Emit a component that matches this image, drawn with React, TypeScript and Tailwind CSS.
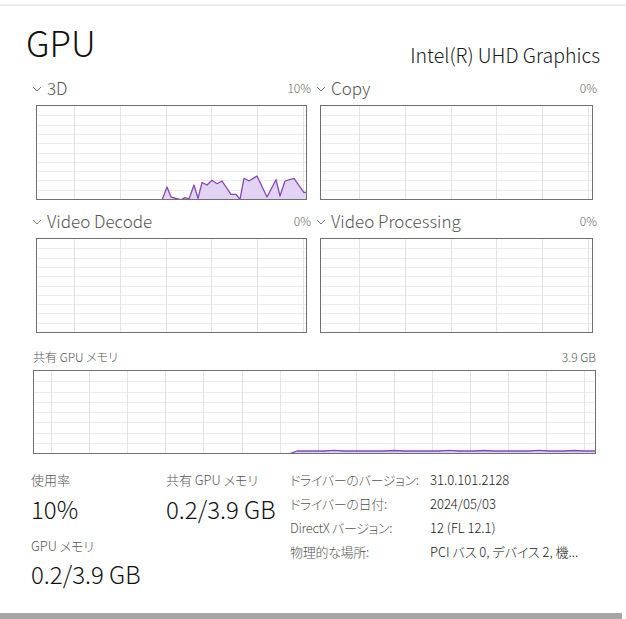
import React from 'react';

const FONT = '"Noto Sans CJK JP", "Noto Sans", sans-serif';

type Pt = [number, number];

// 3D engine samples, measured in box pixels (w 271, h 94)
const data3d: Pt[] = [
  [125, 94], [130, 81], [134, 91], [139, 92.3], [144, 93.7], [148, 91.7], [152, 93],
  [157, 79], [161, 92.3], [165, 76.7], [170, 79], [175, 74.3], [180, 77.7], [185, 75],
  [194, 88.3], [199, 88.3], [203, 93.3], [207, 72.3], [212, 75], [220, 70], [230, 91],
  [239, 73.7], [243, 90], [248, 75], [257, 72.3], [267, 86.7], [271, 85.7],
];

const memData: Pt[] = [
  [255, 83], [263, 80], [290, 80], [300, 79.4], [310, 80], [350, 80], [360, 79.5], [370, 80],
  [405, 80], [415, 79.4], [425, 80], [440, 80], [450, 79.5], [460, 80], [495, 80], [505, 79.3],
  [515, 80], [530, 80], [540, 79.5], [550, 80], [562, 80],
];

function Chevron() {
  return (
    <svg width="10" height="8" viewBox="0 0 10 8" className="mr-[5px] mt-[1px]">
      <polyline points="1,2 5,6 9,2" fill="none" stroke="#7a7a7a" strokeWidth="1" />
    </svg>
  );
}

function Graph({
  w, h, first, step, rows, points,
}: { w: number; h: number; first: number; step: number; rows: number; points?: Pt[] }) {
  const vlines: number[] = [];
  for (let x = first; x < w; x += step) vlines.push(x);
  const hlines: number[] = [];
  for (let i = 1; i < rows; i++) hlines.push((h / rows) * i);
  const line = points ? points.map((p) => p.join(',')).join(' ') : '';
  const area = points ? `${points[0][0]},${h} ${line} ${points[points.length - 1][0]},${h}` : '';
  return (
    <div className="border border-[#707070] bg-white" style={{ width: w + 2, height: h + 2 }}>
      <svg width={w} height={h} className="block">
        {hlines.map((y) => (
          <line key={'h' + y} x1={0} x2={w} y1={Math.round(y) + 0.5} y2={Math.round(y) + 0.5} stroke="#ebebeb" strokeWidth="1" />
        ))}
        {vlines.map((x) => (
          <line key={'v' + x} x1={Math.round(x) + 0.5} x2={Math.round(x) + 0.5} y1={0} y2={h} stroke="#e3e3e3" strokeWidth="1" />
        ))}
        {points && (
          <>
            <polygon points={area} fill="#e2d2f4" />
            <polyline points={line} fill="none" stroke="#8548b8" strokeWidth="1.3" strokeLinejoin="round" />
          </>
        )}
      </svg>
    </div>
  );
}

function Engine({
  name, pct, points, offset, w,
}: { name: string; pct: string; points?: Pt[]; offset: number; w: number }) {
  return (
    <div className="flex flex-col">
      <div className="flex items-center justify-between h-[20px]">
        <div className="flex items-center text-[17px] leading-[20px] text-[#555]">
          <Chevron />
          <span>{name}</span>
        </div>
        <span className="text-[12px] leading-[20px] text-[#666]">{pct}</span>
      </div>
      <div className="mt-[7px] pl-[4px]">
        <Graph w={w} h={93} first={offset} step={45.8} rows={10} points={points} />
      </div>
    </div>
  );
}

const info: [string, string][] = [
  ['ドライバーのバージョン:', '31.0.101.2128'],
  ['ドライバーの日付:', '2024/05/03'],
  ['DirectX バージョン:', '12 (FL 12.1)'],
  ['物理的な場所:', 'PCI バス 0, デバイス 2, 機...'],
];

export default function App() {
  return (
    <div
      className="w-[626px] h-[619px] bg-white flex flex-col overflow-hidden font-light [font-feature-settings:'palt']"
      style={{ fontFamily: FONT }}
    >
      <div className="h-[4px]" />
      <div className="h-[2px] bg-[#ededed]" />

      {/* Header */}
      <div className="flex items-end justify-between pl-[26px] pr-[26px] h-[66px]">
        <span className="text-[35px] leading-[44px] text-[#111] mb-[8px]">GPU</span>
        <span className="text-[19.5px] leading-[24px] text-[#1a1a1a] mb-[5px]">Intel(R) UHD Graphics</span>
      </div>

      {/* Engine graphs */}
      <div className="grid grid-cols-[279px_281px] gap-x-[5px] pl-[32px] mt-[6px]">
        <Engine name="3D" pct="10%" points={data3d} offset={37} w={269} />
        <Engine name="Copy" pct="0%" offset={38} w={271} />
      </div>
      <div className="grid grid-cols-[279px_281px] gap-x-[5px] pl-[32px] mt-[11px]">
        <Engine name="Video Decode" pct="0%" offset={37} w={269} />
        <Engine name="Video Processing" pct="0%" offset={38} w={271} />
      </div>

      {/* Shared memory */}
      <div className="pl-[33px] pr-[30px] mt-[14px]">
        <div className="flex items-center justify-between h-[20px] text-[12px] text-[#555]">
          <span>共有 GPU メモリ</span>
          <span>3.9 GB</span>
        </div>
        <div className="mt-[3px]">
          <Graph w={561} h={82} first={17} step={38.1} rows={8} points={memData} />
        </div>
      </div>

      {/* Stats */}
      <div className="flex pl-[31px] mt-[16px]">
        <div className="w-[135px] flex flex-col">
          <span className="text-[13px] leading-[20px] text-[#555]">使用率</span>
          <span className="text-[24px] leading-[30px] text-[#111] mt-[4px]">10%</span>
          <span className="text-[13px] leading-[20px] text-[#555] mt-[12px]">GPU メモリ</span>
          <span className="text-[24px] leading-[30px] text-[#111] mt-[3px]">0.2/3.9 GB</span>
        </div>
        <div className="w-[124px] flex flex-col">
          <span className="text-[13px] leading-[20px] text-[#555] whitespace-nowrap">共有 GPU メモリ</span>
          <span className="text-[24px] leading-[30px] text-[#111] mt-[4px] whitespace-nowrap">0.2/3.9 GB</span>
        </div>
        <div className="flex flex-col text-[13px] leading-[24px] -mt-[2px]">
          {info.map(([k, v]) => (
            <div key={k} className="flex whitespace-nowrap">
              <span className="w-[140px] text-[#555] tracking-[-0.3px]">{k}</span>
              <span className="text-[#1a1a1a]">{v}</span>
            </div>
          ))}
        </div>
      </div>

      <div className="flex-1" />
      <div className="h-[6px] bg-[#a6a6a6] mr-[4px]" />
    </div>
  );
}
